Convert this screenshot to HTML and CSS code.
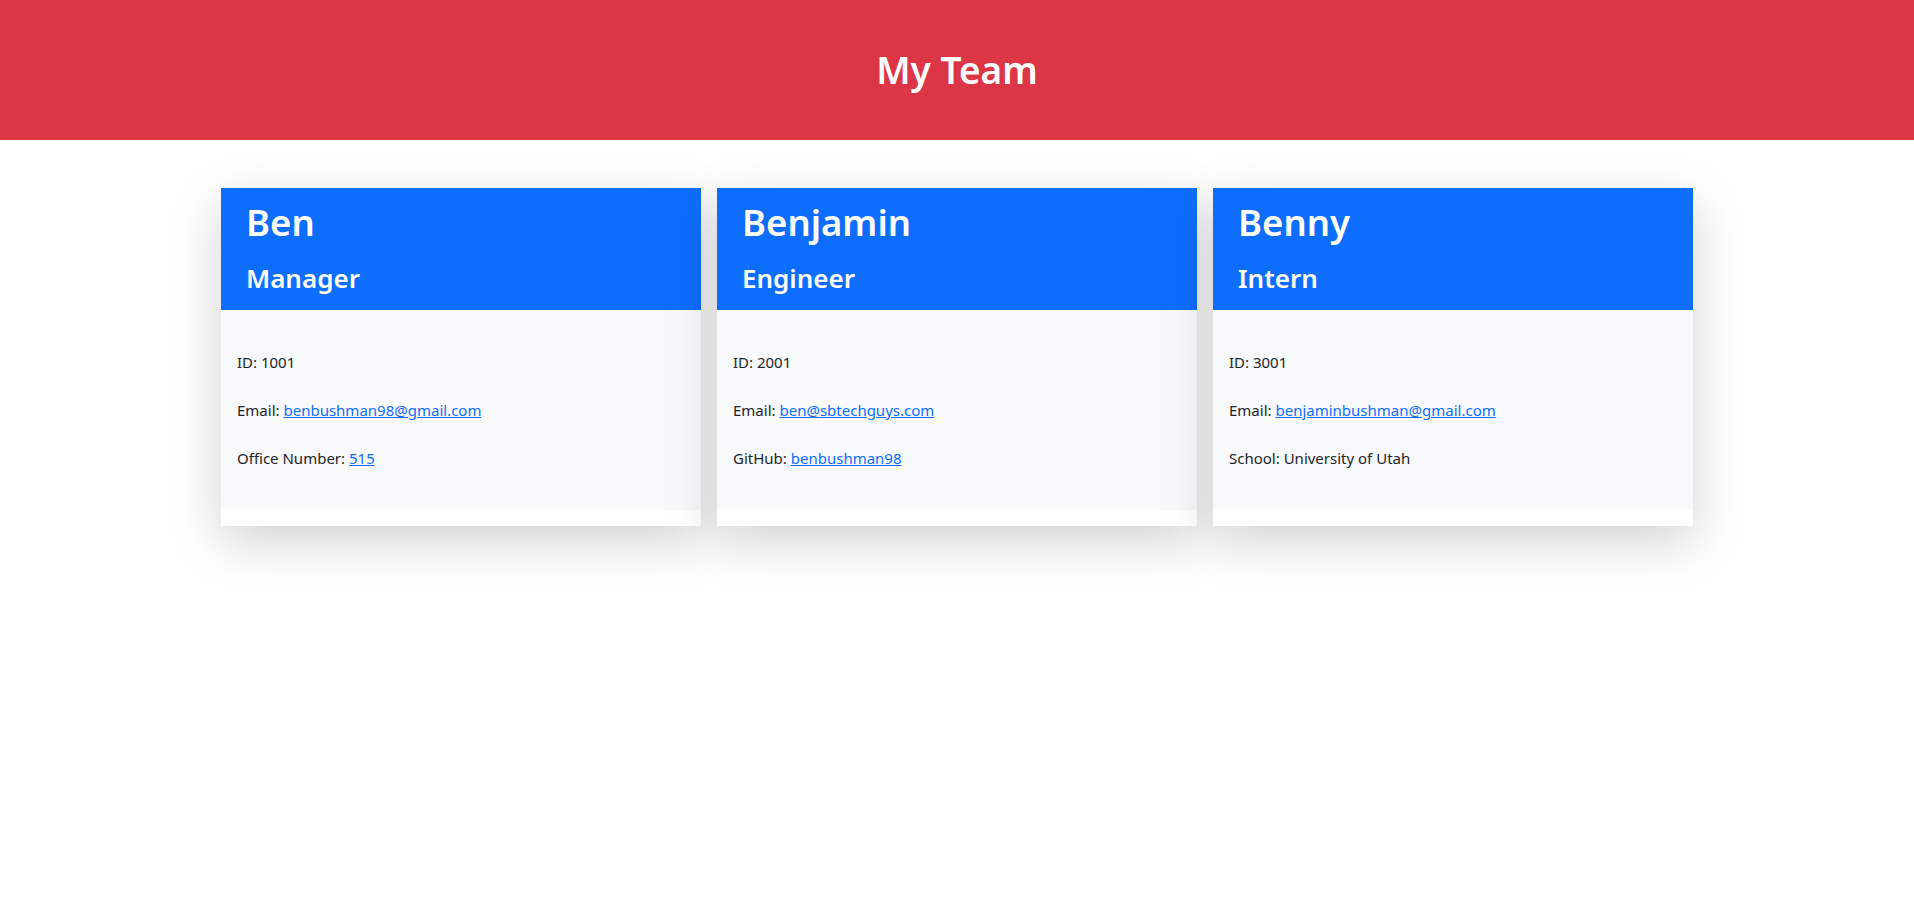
FILE: index.html
```html
<!DOCTYPE html>
<html lang="en">
<head>
<meta charset="UTF-8">
<title>My Team</title>
<link rel="stylesheet" href="styles.css">
</head>
<body>
<header class="banner">
  <h1 class="banner-title">My Team</h1>
</header>
<main class="team">
  <div class="card">
    <div class="card-head">
      <h2 class="name">Ben</h2>
      <h3 class="role">Manager</h3>
    </div>
    <div class="card-body">
      <p class="info">ID: 1001</p>
      <p class="info">Email: <a href="mailto:benbushman98@gmail.com">benbushman98@gmail.com</a></p>
      <p class="info">Office Number: <a href="tel:515">515</a></p>
    </div>
  </div>
  <div class="card">
    <div class="card-head">
      <h2 class="name">Benjamin</h2>
      <h3 class="role">Engineer</h3>
    </div>
    <div class="card-body">
      <p class="info">ID: 2001</p>
      <p class="info">Email: <a href="mailto:ben@sbtechguys.com">ben@sbtechguys.com</a></p>
      <p class="info">GitHub: <a href="#">benbushman98</a></p>
    </div>
  </div>
  <div class="card">
    <div class="card-head">
      <h2 class="name">Benny</h2>
      <h3 class="role">Intern</h3>
    </div>
    <div class="card-body">
      <p class="info">ID: 3001</p>
      <p class="info">Email: <a href="mailto:benjaminbushman@gmail.com">benjaminbushman@gmail.com</a></p>
      <p class="info">School: University of Utah</p>
    </div>
  </div>
</main>
</body>
</html>
```
FILE: styles.css
```css
* { box-sizing: border-box; }
html {
  margin: 0;
  padding: 0;
}
body {
  margin: 0;
  padding: 0;
  min-height: 100vh;
  background: #fff;
  font-family: "Noto Sans", "Open Sans", sans-serif;
  color: #212529;
}
.banner {
  height: 140px;
  background: #dc3545;
  display: flex;
  align-items: center;
  justify-content: center;
}
.banner-title {
  margin: 0;
  color: #fff;
  font-size: 37px;
  font-weight: 600;
  line-height: 48px;
}
.team {
  display: flex;
  justify-content: center;
  align-items: flex-start;
  gap: 16px;
  padding: 48px 0 120px;
}
.card {
  width: 480px;
  background: #fff;
  padding-bottom: 16px;
  box-shadow: 0 16px 48px rgba(0, 0, 0, 0.175);
}
.card-head {
  background: #0d6efd;
  color: #fff;
  height: 122px;
  padding: 10px 25px 0;
}
.name {
  margin: 0 0 15px;
  font-size: 36.5px;
  font-weight: 600;
  line-height: 48px;
}
.role {
  margin: 0;
  font-size: 26px;
  font-weight: 600;
  line-height: 34px;
}
.card-body {
  background: #f8f9fa;
  height: 200px;
  padding: 40px 16px;
  display: flex;
  flex-direction: column;
  gap: 24px;
}
.info {
  margin: 0;
  font-size: 15px;
  line-height: 24px;
}
.info a {
  color: #0d6efd;
  text-decoration: underline;
}
```
